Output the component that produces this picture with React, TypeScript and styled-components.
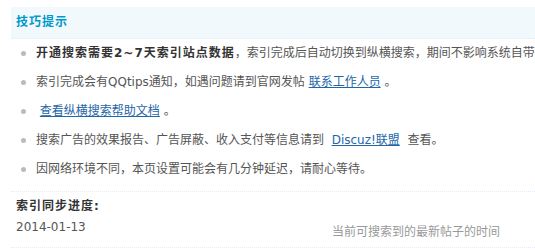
import styled, { createGlobalStyle } from 'styled-components';

const GlobalStyle = createGlobalStyle`
  html, body {
    margin: 0;
    padding: 0;
    background: #fff;
    overflow: hidden;
  }
  body {
    font: 12px/1.5 "DejaVu Sans", "Noto Sans CJK SC", sans-serif;
    color: #555;
  }
`;

const Page = styled.div`
  width: 760px;
  padding: 7px 0 0 11px;
  white-space: nowrap;
`;

const TipsHeader = styled.div`
  height: 31px;
  line-height: 31px;
  padding-left: 5px;
  background: #f2f9fd;
  border-bottom: 1px dotted #deeffb;
  color: #09c;
  font-weight: bold;
  letter-spacing: 1px;
`;

const TipsList = styled.ul`
  list-style: none;
  margin: 0;
  padding: 0 0 7px 0;
`;

const TipItem = styled.li`
  position: relative;
  line-height: 29px;
  padding-left: 25px;

  &::before {
    content: '';
    position: absolute;
    left: 10px;
    top: 12px;
    width: 5px;
    height: 5px;
    border-radius: 50%;
    background: #bbb;
  }
`;

const Strong = styled.strong`
  color: #333;
  letter-spacing: 1px;
`;

const Link = styled.a`
  color: #2366a8;
  text-decoration: underline;
`;

const ProgressTable = styled.div`
  border-top: 1px dotted #deeffb;
  border-bottom: 1px dotted #deeffb;
`;

const ProgressTitle = styled.div`
  padding: 5px 0 1px 5px;
  line-height: 18px;
  font-weight: bold;
  color: #333;
  letter-spacing: 1px;
`;

const ProgressRow = styled.div`
  display: grid;
  grid-template-columns: 316px 1fr;
  height: 31px;
`;

const ProgressValue = styled.div`
  align-self: start;
  padding: 2px 0 0 5px;
  line-height: 18px;
  color: #555;
`;

const ProgressTip = styled.div`
  align-self: center;
  padding-left: 5px;
  line-height: 18px;
  color: #999;
`;

const App = (): JSX.Element => {
  return (
    <>
      <GlobalStyle />
      <Page>
        <TipsHeader>技巧提示</TipsHeader>
        <TipsList>
          <TipItem>
            <Strong>开通搜索需要2~7天索引站点数据</Strong>
            ，索引完成后自动切换到纵横搜索，期间不影响系统自带搜索的使用。
          </TipItem>
          <TipItem>
            索引完成会有QQtips通知，如遇问题请到官网发帖 <Link href="#">联系工作人员</Link> 。
          </TipItem>
          <TipItem>
            {'\u00a0'}
            <Link href="#">查看纵横搜索帮助文档</Link> 。
          </TipItem>
          <TipItem>
            搜索广告的效果报告、广告屏蔽、收入支付等信息请到{'\u00a0 '}
            <Link href="#">Discuz!联盟</Link>
            {'\u00a0 '}查看。
          </TipItem>
          <TipItem>因网络环境不同，本页设置可能会有几分钟延迟，请耐心等待。</TipItem>
        </TipsList>
        <ProgressTable>
          <ProgressTitle>索引同步进度:</ProgressTitle>
          <ProgressRow>
            <ProgressValue>2014-01-13</ProgressValue>
            <ProgressTip>当前可搜索到的最新帖子的时间</ProgressTip>
          </ProgressRow>
        </ProgressTable>
      </Page>
    </>
  );
};

export default App;
